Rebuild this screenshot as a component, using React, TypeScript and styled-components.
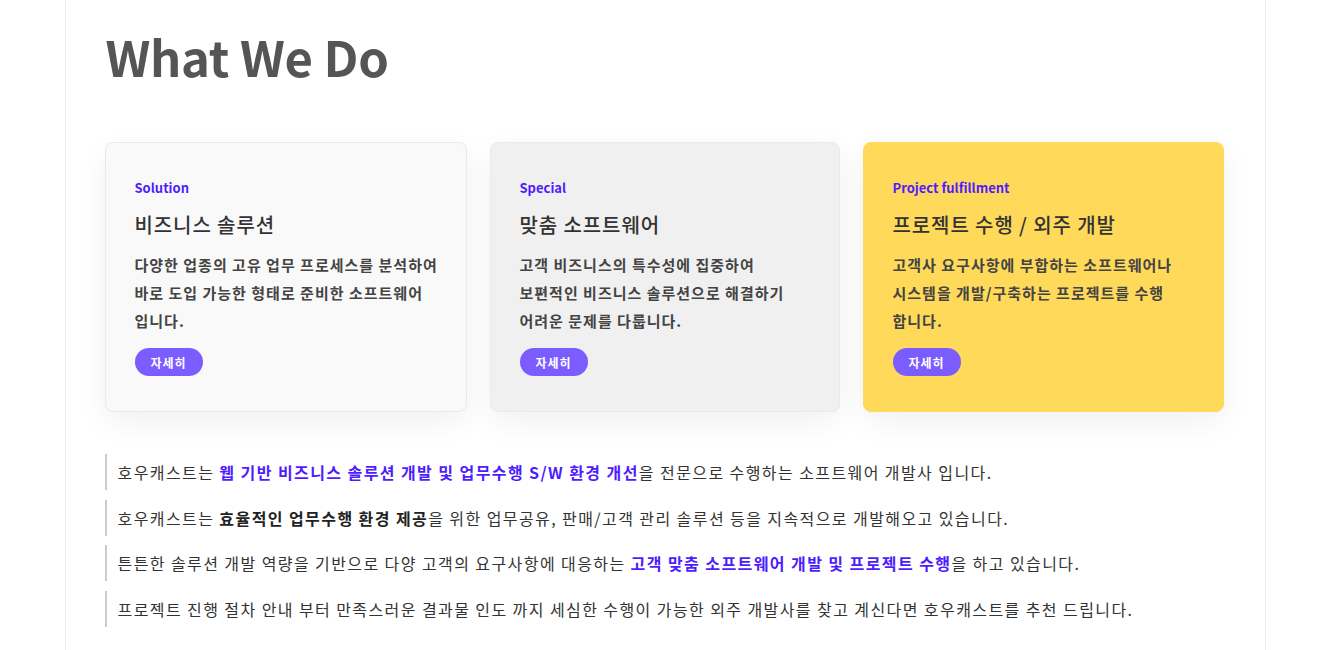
import React from "react";
import styled, { createGlobalStyle } from "styled-components";

const GlobalStyle = createGlobalStyle`
  body {
    margin: 0;
    background: #fff;
    font-family: "Noto Sans CJK KR", "Noto Sans", sans-serif;
  }
`;

const cards = [
  {
    label: "Solution",
    title: "비즈니스 솔루션",
    desc: ["다양한 업종의 고유 업무 프로세스를 분석하여", "바로 도입 가능한 형태로 준비한 소프트웨어", "입니다."],
    bg: "#f9f9f9",
    width: 362,
  },
  {
    label: "Special",
    title: "맞춤 소프트웨어",
    desc: ["고객 비즈니스의 특수성에 집중하여", "보편적인 비즈니스 솔루션으로 해결하기", "어려운 문제를 다룹니다."],
    bg: "#f0f0f0",
    width: 350,
  },
  {
    label: "Project fulfillment",
    title: "프로젝트 수행 / 외주 개발",
    desc: ["고객사 요구사항에 부합하는 소프트웨어나", "시스템을 개발/구축하는 프로젝트를 수행", "합니다."],
    bg: "#ffd95a",
    width: 361,
  },
];

export default function App() {
  return (
    <>
      <GlobalStyle />
      <Page>
        <Title>What We Do</Title>
        <CardRow>
          {cards.map((c) => (
            <Card key={c.label} $bg={c.bg} $width={c.width}>
              <Label>{c.label}</Label>
              <CardTitle>{c.title}</CardTitle>
              <Desc>
                {c.desc.map((d, i) => (
                  <React.Fragment key={i}>
                    {d}
                    {i < c.desc.length - 1 && <br />}
                  </React.Fragment>
                ))}
              </Desc>
              <MoreButton>자세히</MoreButton>
            </Card>
          ))}
        </CardRow>
        <Notes>
          <Note>
            호우캐스트는 <Accent>웹 기반 비즈니스 솔루션 개발 및 업무수행 S/W 환경 개선</Accent>을 전문으로 수행하는 소프트웨어 개발사 입니다.
          </Note>
          <Note>
            호우캐스트는 <Strong>효율적인 업무수행 환경 제공</Strong>을 위한 업무공유, 판매/고객 관리 솔루션 등을 지속적으로 개발해오고 있습니다.
          </Note>
          <Note>
            튼튼한 솔루션 개발 역량을 기반으로 다양 고객의 요구사항에 대응하는 <Accent>고객 맞춤 소프트웨어 개발 및 프로젝트 수행</Accent>을 하고 있습니다.
          </Note>
          <Note>
            프로젝트 진행 절차 안내 부터 만족스러운 결과물 인도 까지 세심한 수행이 가능한 외주 개발사를 찾고 계신다면 호우캐스트를 추천 드립니다.
          </Note>
        </Notes>
      </Page>
    </>
  );
}

const Page = styled.div`
  box-sizing: border-box;
  width: 1201px;
  margin: 0 auto;
  min-height: 650px;
  padding: 22px 40px 20px 39px;
  border-left: 1px solid #eeeeee;
  border-right: 1px solid #eeeeee;
`;

const Title = styled.h1`
  margin: 0 0 52px;
  padding-left: 1px;
  font-size: 49px;
  font-weight: 700;
  line-height: 68px;
  color: #555555;
  letter-spacing: -0.3px;
`;

const CardRow = styled.div`
  display: flex;
  gap: 23px;
`;

const Card = styled.div<{ $bg: string; $width: number }>`
  box-sizing: border-box;
  width: ${(p) => p.$width}px;
  height: 270px;
  padding: 36px 29px 0;
  background: ${(p) => p.$bg};
  border: 1px solid ${(p) => (p.$bg === "#ffd95a" ? "#ffd95a" : "#eaeaea")};
  border-radius: 8px;
  box-shadow: 0 10px 30px rgba(0, 0, 0, 0.06);
`;

const Label = styled.div`
  font-size: 13px;
  font-weight: 700;
  line-height: 18px;
  color: #4f1cff;
`;

const CardTitle = styled.div`
  margin-top: 14px;
  font-size: 20px;
  font-weight: 500;
  line-height: 28px;
  letter-spacing: 0.9px;
  color: #333333;
`;

const Desc = styled.p`
  margin: 12px 0 0;
  font-size: 15px;
  font-weight: 700;
  line-height: 28px;
  letter-spacing: 1px;
  white-space: nowrap;
  color: #444444;
`;

const MoreButton = styled.button`
  margin-top: 13px;
  width: 68px;
  height: 28px;
  border: none;
  border-radius: 14px;
  background: #7b5cff;
  color: #ffffff;
  font-family: inherit;
  font-size: 12px;
  font-weight: 700;
  letter-spacing: 1px;
  cursor: pointer;
`;

const Notes = styled.div`
  display: flex;
  flex-direction: column;
  gap: 9.5px;
  margin-top: 42px;
`;

const Note = styled.p`
  margin: 0;
  padding: 3px 0 3px 11px;
  border-left: 2px solid #cccccc;
  font-size: 16px;
  line-height: 30px;
  letter-spacing: 1.42px;
  color: #333333;
`;

const Accent = styled.strong`
  color: #4f1cff;
  font-weight: 700;
`;

const Strong = styled.strong`
  color: #222222;
  font-weight: 700;
`;
